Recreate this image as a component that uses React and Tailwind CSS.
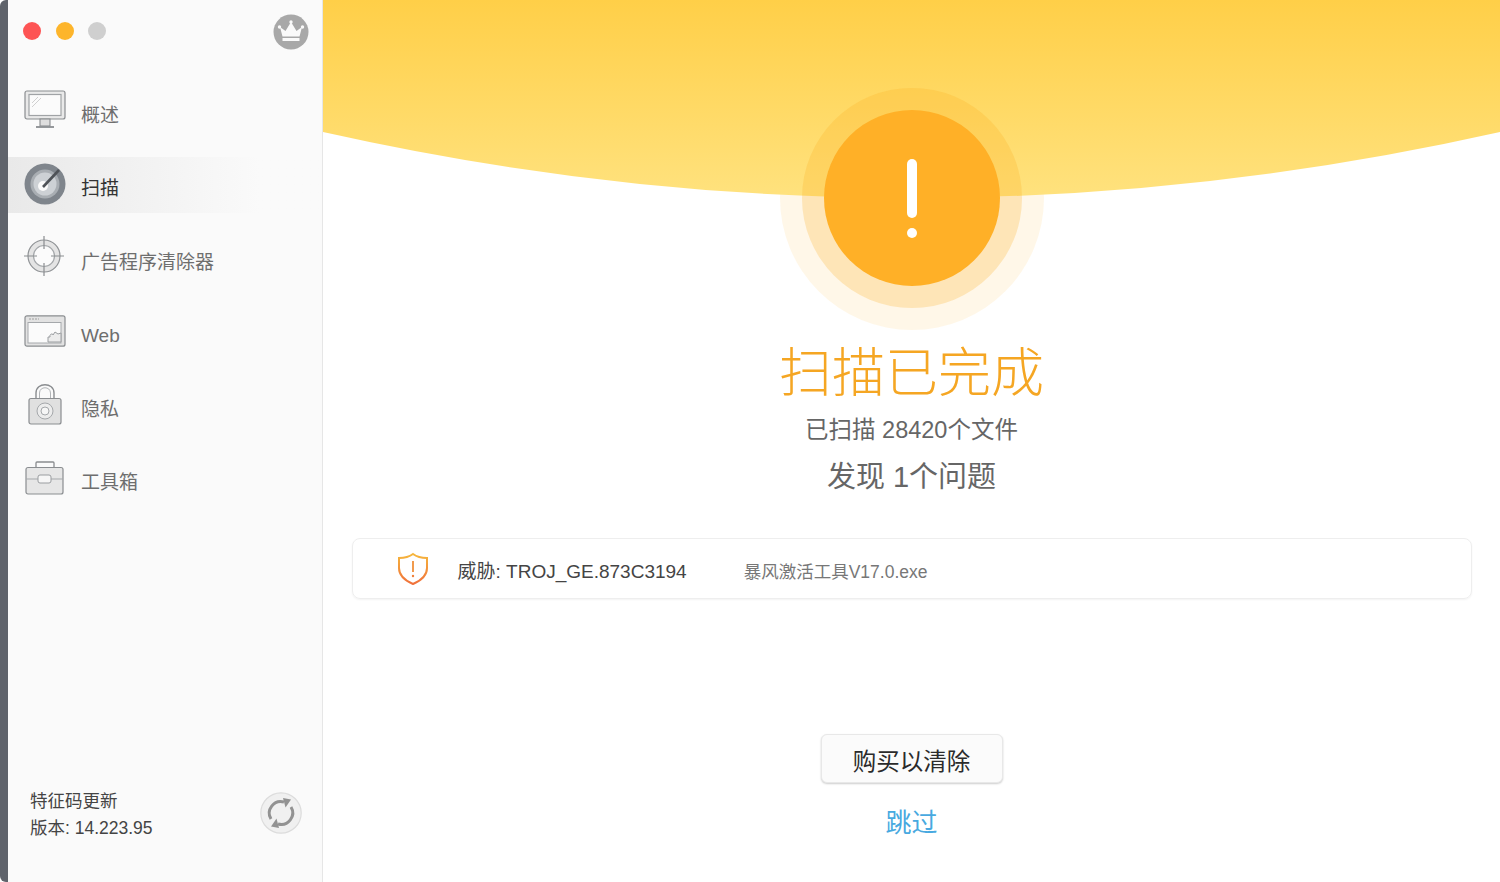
import React from 'react';

const MonitorIcon = () => (
    <svg width="42" height="40" viewBox="0 0 42 40" fill="none">
        <rect x="1" y="1" width="40" height="28" rx="2" fill="#e9e9e9" stroke="#8a8d90" strokeWidth="1.2" />
        <rect x="5" y="4.5" width="32" height="21" fill="#fbfbfb" stroke="#a0a3a6" strokeWidth="1.2" />
        <path d="M8 13 L14 7 M8 17 L17 8" stroke="#d0d0d0" strokeWidth="1" />
        <rect x="16" y="29" width="10" height="7" fill="#dedede" stroke="#8a8d90" strokeWidth="1.1" />
        <path d="M12 37 H30" stroke="#8a8d90" strokeWidth="1.8" />
    </svg>
);

const ScanIcon = () => (
    <svg width="42" height="42" viewBox="0 0 42 42" fill="none">
        <circle cx="21" cy="21" r="20.5" fill="#7f858c" />
        <circle cx="21" cy="21" r="14.5" fill="#a9aeb3" />
        <circle cx="21" cy="21" r="11.5" fill="#cdd1d5" />
        <circle cx="19" cy="23" r="5" fill="#fafafa" />
        <path d="M19 24 L35 7" stroke="#4e5257" strokeWidth="2.6" />
    </svg>
);

const TargetIcon = () => (
    <svg width="42" height="42" viewBox="0 0 42 42" fill="none">
        <circle cx="20" cy="20" r="16" fill="#e4e4e4" stroke="#8f9295" strokeWidth="1.2" />
        <circle cx="20" cy="20" r="10.5" fill="#fbfbfb" stroke="#a5a8ab" strokeWidth="1.2" />
        <path d="M20 0 V13 M20 27 V40 M0 20 H13 M27 20 H40" stroke="#8a8d90" strokeWidth="1.2" />
    </svg>
);

const WebIcon = () => (
    <svg width="42" height="32" viewBox="0 0 42 32" fill="none">
        <rect x="1" y="0.8" width="40" height="30.4" rx="2" fill="#e2e2e2" stroke="#8a8d90" strokeWidth="1.2" />
        <rect x="4" y="7.5" width="33" height="20.5" fill="#fbfbfb" stroke="#a5a8ab" strokeWidth="1" />
        <path d="M5 4 H15" stroke="#b5b5b5" strokeWidth="1.4" strokeDasharray="2 1" />
        <path d="M24 27 V22 H26 C25 19 29 18 29 20 L31 17 L34 19 L37 18 V27 Z" fill="#ececec" stroke="#9a9da0" strokeWidth="1" />
    </svg>
);

const LockIcon = () => (
    <svg width="34" height="42" viewBox="0 0 34 42" fill="none">
        <path d="M8 16 V10 C8 -1 26 -1 26 10 V16" stroke="#8a8d90" strokeWidth="1.4" />
        <path d="M11.5 16 V10 C11.5 3 22.5 3 22.5 10 V16" stroke="#b0b3b6" strokeWidth="1" />
        <rect x="1" y="15.5" width="32" height="25.5" rx="2" fill="#e0e0e0" stroke="#8a8d90" strokeWidth="1.2" />
        <circle cx="17" cy="28" r="8" fill="#ececec" stroke="#a5a8ab" strokeWidth="1" />
        <circle cx="17" cy="28" r="4" fill="#f6f6f6" stroke="#a5a8ab" strokeWidth="1" />
    </svg>
);

const ToolboxIcon = () => (
    <svg width="40" height="34" viewBox="0 0 40 34" fill="none">
        <path d="M11 7 V2 Q11 1 12 1 H28 Q29 1 29 2 V7" stroke="#8a8d90" strokeWidth="1.3" />
        <rect x="1" y="6.5" width="37" height="26.5" rx="2" fill="#e6e6e6" stroke="#8a8d90" strokeWidth="1.2" />
        <path d="M1 18 H13 M26 18 H38" stroke="#a5a8ab" strokeWidth="1" />
        <rect x="13" y="14" width="13" height="8" rx="2" fill="#f6f6f6" stroke="#9a9da0" strokeWidth="1" />
    </svg>
);

const CrownIcon = () => (
    <svg width="36" height="36" viewBox="0 0 36 36">
        <circle cx="18" cy="18" r="17.5" fill="#a8a8a8" />
        <path d="M7 13 L12.5 17 L18 8 L23.5 17 L29 13 L26.5 22.5 H9.5 Z" fill="#fafafa" />
        <circle cx="18" cy="8" r="1.7" fill="#fafafa" />
        <circle cx="6.5" cy="13" r="1.7" fill="#fafafa" />
        <circle cx="29.5" cy="13" r="1.7" fill="#fafafa" />
        <rect x="9.5" y="24" width="17" height="3" fill="#fafafa" />
    </svg>
);

const RefreshIcon = () => (
    <svg width="42" height="42" viewBox="0 0 42 42" fill="none">
        <circle cx="21" cy="21" r="20.2" fill="#f0f0f0" stroke="#dcdcdc" strokeWidth="1.2" />
        <path d="M11 27 A11.5 11.5 0 0 1 24 10" stroke="#929292" strokeWidth="3" />
        <path d="M31 15 A11.5 11.5 0 0 1 18 32" stroke="#929292" strokeWidth="3" />
        <path d="M23 6 L31 7.5 L25.5 15.5 Z" fill="#929292" />
        <path d="M19 36 L11 34.5 L16.5 26.5 Z" fill="#929292" />
    </svg>
);

const ShieldIcon = () => (
    <svg width="32" height="34" viewBox="0 0 32 34" fill="none">
        <defs>
            <linearGradient id="shield" x1="0" y1="0" x2="0" y2="1">
                <stop offset="0" stopColor="#f6b73c" />
                <stop offset="1" stopColor="#f0703a" />
            </linearGradient>
        </defs>
        <path d="M16 2 C20 5 25 6 30 6 V16 C30 24 23 29 16 32 C9 29 2 24 2 16 V6 C7 6 12 5 16 2 Z" stroke="url(#shield)" strokeWidth="2" />
        <path d="M16 9 V20" stroke="#f0903a" strokeWidth="1.8" />
        <circle cx="16" cy="24" r="1.2" fill="#f0803a" />
    </svg>
);

const navItems = [
    { label: '概述', icon: <MonitorIcon /> },
    { label: '扫描', icon: <ScanIcon />, active: true },
    { label: '广告程序清除器', icon: <TargetIcon /> },
    { label: 'Web', icon: <WebIcon /> },
    { label: '隐私', icon: <LockIcon /> },
    { label: '工具箱', icon: <ToolboxIcon /> },
];

const App = () => {
    return (
        <div className="w-[1500px] h-[882px] flex overflow-hidden bg-white [font-family:'Liberation_Sans','Noto_Sans_CJK_SC',sans-serif]">
            {/* Window edge */}
            <div className="w-2 shrink-0 bg-[#5f636b] rounded-tl-md rounded-bl-md" />

            {/* Sidebar */}
            <div className="w-[315px] shrink-0 bg-[#fafafa] border-r border-[#e6e6e6] flex flex-col">
                <div className="h-[83px] shrink-0 flex items-start justify-between pl-[15px] pr-[13px] pt-[14px]">
                    <div className="flex gap-[14.5px] pt-[8px]">
                        <span className="w-[18px] h-[18px] rounded-full bg-[#fd5454]" />
                        <span className="w-[18px] h-[18px] rounded-full bg-[#fdb52b]" />
                        <span className="w-[18px] h-[18px] rounded-full bg-[#cfcfcf]" />
                    </div>
                    <CrownIcon />
                </div>

                <nav className="flex flex-col gap-[17.5px]">
                    {navItems.map((item) => (
                        <div
                            key={item.label}
                            className={`h-[56px] flex items-center pl-4 ${item.active ? 'bg-gradient-to-r from-[#e9e9e9] to-[#fafafa] to-80% text-[#333333]' : 'text-[#6e6e6e]'}`}
                        >
                            <div className="w-[42px] flex justify-center -mt-[2px]">{item.icon}</div>
                            <span className="ml-[15px] text-[19px] pt-[10px]">{item.label}</span>
                        </div>
                    ))}
                </nav>

                <div className="mt-auto flex items-center justify-between pl-[22px] pr-5 pb-[40px]">
                    <div className="text-[17.5px] leading-[27px] text-[#444444] pt-[4px]">
                        <div>特征码更新</div>
                        <div>版本: 14.223.95</div>
                    </div>
                    <RefreshIcon />
                </div>
            </div>

            {/* Main */}
            <div className="relative flex-1 flex flex-col items-center">
                <svg className="absolute top-0 left-0" width="1177" height="240" viewBox="0 0 1177 240">
                    <defs>
                        <linearGradient id="sky" x1="0" y1="0" x2="0" y2="1">
                            <stop offset="0" stopColor="#ffcf48" />
                            <stop offset="1" stopColor="#ffe27e" />
                        </linearGradient>
                    </defs>
                    <path d="M0 0 H1177 V132 Q589 264 0 132 Z" fill="url(#sky)" />
                </svg>

                {/* outer ring stays under the yellow wave, only the part on white shows */}
                <div className="mt-[66px] w-[264px] h-[264px] shrink-0 rounded-full bg-[#fdb022]/10 flex items-center justify-center">
                    <div className="relative w-[220px] h-[220px] rounded-full bg-[#fdb022]/25 flex items-center justify-center">
                        <div className="w-[176px] h-[176px] rounded-full bg-[#ffb027] flex flex-col items-center justify-center">
                            <div className="w-[10px] h-[59px] rounded-full bg-white" />
                            <div className="w-[10px] h-[10px] rounded-full bg-white mt-[10px]" />
                        </div>
                    </div>
                </div>

                <div className="relative mt-[11px] text-[53px] leading-[66px] font-light text-[#f5a623]">扫描已完成</div>
                <div className="mt-[8px] text-[23.5px] leading-[30px] text-[#666666]">已扫描 28420个文件</div>
                <div className="mt-[14px] text-[29px] leading-[36px] text-[#666666]">发现 1个问题</div>

                <div className="mt-[43px] w-[1120px] h-[61px] shrink-0 rounded-lg border border-[#eeeeee] shadow-[0_1px_2px_rgba(0,0,0,0.05)] flex items-center pl-[44px]">
                    <ShieldIcon />
                    <span className="ml-[29px] text-[19px] pt-[7px] text-[#444444]">威胁: TROJ_GE.873C3194</span>
                    <span className="ml-[57px] text-[17.5px] pt-[7px] text-[#777777]">暴风激活工具V17.0.exe</span>
                </div>

                <button className="mt-[135px] w-[182px] h-[49px] shrink-0 rounded-md bg-[#fbfbfb] border border-[#e8e8e8] shadow-[0_1px_2px_rgba(0,0,0,0.2)] pt-[8px] text-[23.5px] text-[#2b2b2b]">
                    购买以清除
                </button>
                <a href="#" className="mt-[22px] text-[26px] leading-[36px] text-[#48a9e0]">跳过</a>
            </div>
        </div>
    );
};

export default App;
